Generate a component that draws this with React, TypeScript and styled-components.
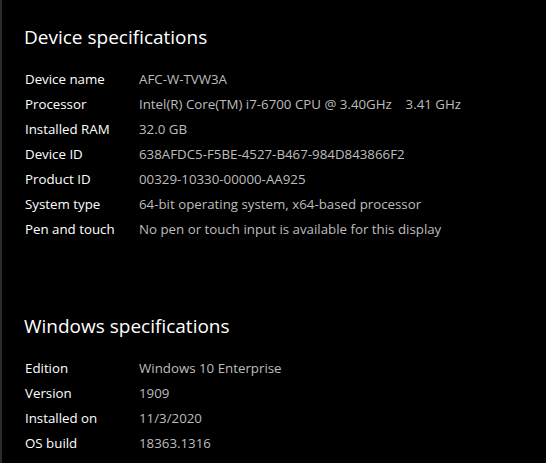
import React, { FC } from "react";
import styled, { createGlobalStyle } from "styled-components";

const GlobalStyle = createGlobalStyle`
  html, body {
    margin: 0;
    padding: 0;
    background-color: #000;
  }
  body {
    font-family: "Open Sans", "Noto Sans", sans-serif;
  }
`;

const Page = styled.div`
  width: 546px;
  height: 463px;
  box-sizing: border-box;
  border-left: 2px solid #2b2b2b;
  background-color: #000;
  padding: 22px 0 0 22px;
  overflow: hidden;
`;

const Section = styled.section<{ $gap?: number }>`
  margin-top: ${(props) => props.$gap ?? 0}px;
`;

const Title = styled.h2`
  margin: 0 0 14px 0;
  font-size: 19px;
  font-weight: 400;
  line-height: 30px;
  color: #fff;
`;

const Table = styled.dl`
  margin: 0;
  display: grid;
  grid-template-columns: 115px auto;
  grid-auto-rows: 25px;
  align-items: center;
  font-size: 13.3px;
`;

const Label = styled.dt`
  margin: 0;
  color: #fff;
  padding-left: 1px;
`;

const Value = styled.dd`
  margin: 0;
  color: #bdbdbd;
  white-space: pre;
`;

interface ISpec {
  label: string;
  value: string;
}

const device: ISpec[] = [
  { label: "Device name", value: "AFC-W-TVW3A" },
  { label: "Processor", value: "Intel(R) Core(TM) i7-6700 CPU @ 3.40GHz    3.41 GHz" },
  { label: "Installed RAM", value: "32.0 GB" },
  { label: "Device ID", value: "638AFDC5-F5BE-4527-B467-984D843866F2" },
  { label: "Product ID", value: "00329-10330-00000-AA925" },
  { label: "System type", value: "64-bit operating system, x64-based processor" },
  { label: "Pen and touch", value: "No pen or touch input is available for this display" },
];

const windows: ISpec[] = [
  { label: "Edition", value: "Windows 10 Enterprise" },
  { label: "Version", value: "1909" },
  { label: "Installed on", value: "11/3/2020" },
  { label: "OS build", value: "18363.1316" },
];

const SpecSection: FC<{ title: string; specs: ISpec[]; gap?: number }> = ({
  title,
  specs,
  gap,
}) => (
  <Section $gap={gap}>
    <Title>{title}</Title>
    <Table>
      {specs.map((spec) => (
        <React.Fragment key={spec.label}>
          <Label>{spec.label}</Label>
          <Value>{spec.value}</Value>
        </React.Fragment>
      ))}
    </Table>
  </Section>
);

const App: FC = () => {
  return (
    <>
      <GlobalStyle />
      <Page>
        <SpecSection title="Device specifications" specs={device} />
        <SpecSection title="Windows specifications" specs={windows} gap={70} />
      </Page>
    </>
  );
};

export default App;
